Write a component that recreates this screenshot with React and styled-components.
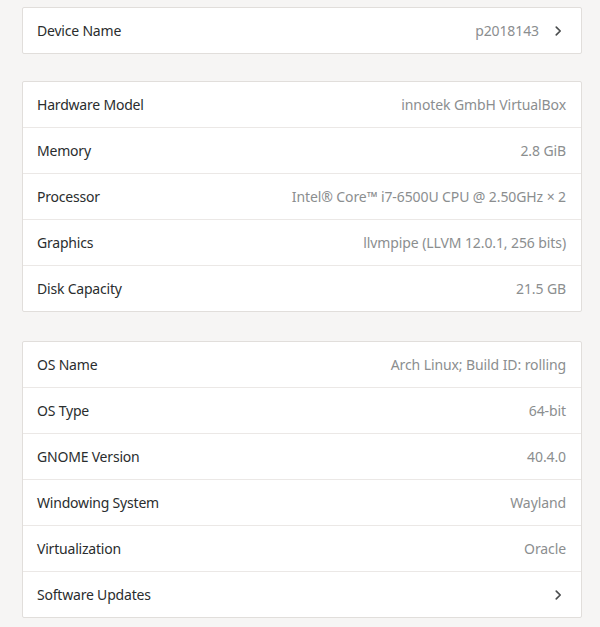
import React from "react";
import styled, { createGlobalStyle } from "styled-components";

const Global = createGlobalStyle`
  html, body {
    margin: 0;
    padding: 0;
    background: #f6f5f4;
  }
  body {
    font-family: "Noto Sans", "Open Sans", sans-serif;
    -webkit-font-smoothing: antialiased;
  }
`;

const Page = styled.div`
  display: flex;
  flex-direction: column;
  padding: 7px 18px 10px 22px;
  width: 600px;
  box-sizing: border-box;
`;

const Card = styled.div`
  display: flex;
  flex-direction: column;
  background: #ffffff;
  border: 1px solid #e1dedb;
  border-radius: 2px;
  margin-top: ${(p) => p.$gap || 0}px;
`;

const Row = styled.div`
  display: flex;
  align-items: center;
  justify-content: space-between;
  height: 45px;
  padding: 0 15px 0 14px;
  & + & {
    border-top: 1px solid #ebe8e6;
  }
`;

const Label = styled.span`
  font-size: 14px;
  color: #2a2d2e;
  letter-spacing: -0.2px;
`;

const Right = styled.div`
  display: flex;
  align-items: center;
  gap: 12px;
`;

const Value = styled.span`
  font-size: 14px;
  color: #8b8e8f;
  letter-spacing: -0.1px;
`;

const Chevron = styled.svg`
  width: 14px;
  height: 14px;
  margin-right: 1px;
  color: #4a4d4e;
`;

const Arrow = () => (
  <Chevron viewBox="0 0 16 16" fill="none">
    <path
      d="M6 3.5 L10.5 8 L6 12.5"
      stroke="currentColor"
      strokeWidth="1.9"
      strokeLinecap="round"
      strokeLinejoin="round"
    />
  </Chevron>
);

const hardware = [
  ["Hardware Model", "innotek GmbH VirtualBox"],
  ["Memory", "2.8 GiB"],
  ["Processor", "Intel® Core™ i7-6500U CPU @ 2.50GHz × 2"],
  ["Graphics", "llvmpipe (LLVM 12.0.1, 256 bits)"],
  ["Disk Capacity", "21.5 GB"],
];

const software = [
  ["OS Name", "Arch Linux; Build ID: rolling"],
  ["OS Type", "64-bit"],
  ["GNOME Version", "40.4.0"],
  ["Windowing System", "Wayland"],
  ["Virtualization", "Oracle"],
];

export default function App() {
  return (
    <>
      <Global />
      <Page>
        <Card>
          <Row>
            <Label>Device Name</Label>
            <Right>
              <Value>p2018143</Value>
              <Arrow />
            </Right>
          </Row>
        </Card>
        <Card $gap={27}>
          {hardware.map(([k, v]) => (
            <Row key={k}>
              <Label>{k}</Label>
              <Value>{v}</Value>
            </Row>
          ))}
        </Card>
        <Card $gap={29}>
          {software.map(([k, v]) => (
            <Row key={k}>
              <Label>{k}</Label>
              <Value>{v}</Value>
            </Row>
          ))}
          <Row>
            <Label>Software Updates</Label>
            <Arrow />
          </Row>
        </Card>
      </Page>
    </>
  );
}
